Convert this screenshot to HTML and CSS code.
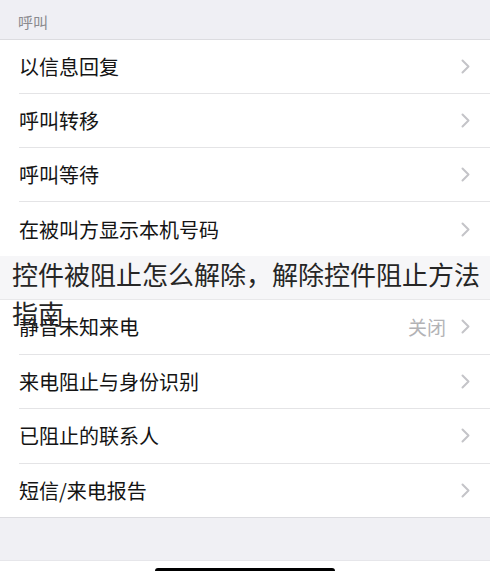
FILE: index.html
```html
<!DOCTYPE html>
<html lang="zh-CN">
<head>
<meta charset="utf-8">
<title>呼叫</title>
<link rel="stylesheet" href="styles.css">
</head>
<body>
<div class="page">
  <div class="header">呼叫</div>
  <div class="group g1">
    <div class="row"><span class="label">以信息回复</span><span class="right"><svg class="chev" viewBox="0 0 9 15"><polyline points="1.5,1.5 7.5,7.5 1.5,13.5"/></svg></span></div>
    <div class="row"><span class="label">呼叫转移</span><span class="right"><svg class="chev" viewBox="0 0 9 15"><polyline points="1.5,1.5 7.5,7.5 1.5,13.5"/></svg></span></div>
    <div class="row"><span class="label">呼叫等待</span><span class="right"><svg class="chev" viewBox="0 0 9 15"><polyline points="1.5,1.5 7.5,7.5 1.5,13.5"/></svg></span></div>
    <div class="row last"><span class="label">在被叫方显示本机号码</span><span class="right"><svg class="chev" viewBox="0 0 9 15"><polyline points="1.5,1.5 7.5,7.5 1.5,13.5"/></svg></span></div>
  </div>
  <div class="gap"></div>
  <div class="group g2">
    <div class="row"><span class="label">静音未知来电</span><span class="right"><span class="value">关闭</span><svg class="chev" viewBox="0 0 9 15"><polyline points="1.5,1.5 7.5,7.5 1.5,13.5"/></svg></span></div>
    <div class="row"><span class="label">来电阻止与身份识别</span><span class="right"><svg class="chev" viewBox="0 0 9 15"><polyline points="1.5,1.5 7.5,7.5 1.5,13.5"/></svg></span></div>
    <div class="row"><span class="label">已阻止的联系人</span><span class="right"><svg class="chev" viewBox="0 0 9 15"><polyline points="1.5,1.5 7.5,7.5 1.5,13.5"/></svg></span></div>
    <div class="row last"><span class="label">短信/来电报告</span><span class="right"><svg class="chev" viewBox="0 0 9 15"><polyline points="1.5,1.5 7.5,7.5 1.5,13.5"/></svg></span></div>
  </div>
  <div class="bottom"></div>
  <div class="homebar"><div class="indicator"></div></div>
  <h1 class="title">控件被阻止怎么解除，解除控件阻止方法指南</h1>
</div>
</body>
</html>
```
FILE: styles.css
```css
html, body {
  margin: 0;
  padding: 0;
  background: #ffffff;
}
.page {
  position: relative;
  width: 490px;
  height: 571px;
  overflow: hidden;
  font-family: "Noto Sans CJK SC", "Noto Sans", sans-serif;
}
.header {
  height: 40px;
  box-sizing: border-box;
  padding: 3px 0 0 18px;
  display: flex;
  align-items: center;
  background: #efeff4;
  color: #8a8a8e;
  font-size: 15px;
  border-bottom: 1px solid #dcdce0;
}
.group {
  background: #ffffff;
}
.row {
  display: flex;
  align-items: center;
  justify-content: space-between;
  box-sizing: border-box;
  height: 54px;
  margin-left: 19px;
  padding-right: 20px;
  border-bottom: 1px solid #e4e4e6;
  color: #141414;
  font-size: 20px;
}
.g2 .row {
  height: 54.5px;
}
.row.last {
  margin-left: 0;
  padding-left: 19px;
  border-bottom: 1px solid #dcdce0;
}
.g1 .row.last {
  border-bottom: none;
}
.right {
  display: flex;
  align-items: center;
  gap: 15px;
}
.value {
  color: #b3b3b6;
  font-size: 19px;
}
.chev {
  width: 9px;
  height: 15px;
  fill: none;
  stroke: #c4c4c8;
  stroke-width: 2;
  stroke-linecap: round;
  stroke-linejoin: round;
}
.gap {
  height: 43px;
  background: #f6f6f8;
  border-bottom: 1px solid #e8e8ea;
}
.bottom {
  height: 42px;
  background: #f0f0f4;
  border-bottom: 1px solid #e6e6ea;
}
.homebar {
  height: 11px;
  background: #ffffff;
  display: flex;
  justify-content: center;
  align-items: flex-end;
}
.indicator {
  width: 180px;
  height: 4px;
  background: #000000;
  border-radius: 3px 3px 0 0;
}
.title {
  position: absolute;
  top: 254px;
  left: 12px;
  width: 475px;
  margin: 0;
  font-size: 26px;
  line-height: 39px;
  font-weight: 400;
  color: #262626;
}
```
